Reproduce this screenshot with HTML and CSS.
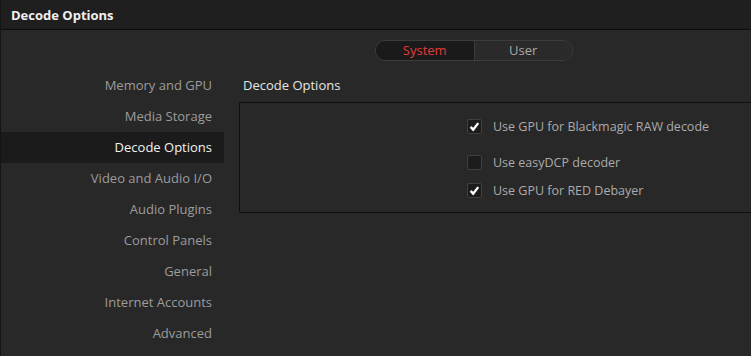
FILE: index.html
```html
<!DOCTYPE html>
<html lang="en">
<head>
    <meta charset="UTF-8">
    <title>Decode Options</title>
    <link rel="stylesheet" href="styles.css">
</head>
<body>
    <div class="window">
        <div class="header">Decode Options</div>

        <div class="tabs">
            <div class="toggle">
                <span class="seg active">System</span>
                <span class="seg">User</span>
            </div>
        </div>

        <div class="panel">
            <ul class="sidebar">
                <li>Memory and GPU</li>
                <li>Media Storage</li>
                <li class="selected">Decode Options</li>
                <li>Video and Audio I/O</li>
                <li>Audio Plugins</li>
                <li>Control Panels</li>
                <li>General</li>
                <li>Internet Accounts</li>
                <li>Advanced</li>
            </ul>

            <div class="content">
                <div class="section-title">Decode Options</div>
                <div class="box">
                    <label class="option first">
                        <span class="check"><svg viewBox="0 0 14 14"><path d="M2.8 7.4 L5.6 10.4 L11 3.4" /></svg></span>
                        Use GPU for Blackmagic RAW decode
                    </label>
                    <label class="option second">
                        <span class="check"></span>
                        Use easyDCP decoder
                    </label>
                    <label class="option third">
                        <span class="check"><svg viewBox="0 0 14 14"><path d="M2.8 7.4 L5.6 10.4 L11 3.4" /></svg></span>
                        Use GPU for RED Debayer
                    </label>
                </div>
            </div>
        </div>
    </div>
</body>
</html>
```

FILE: styles.css
```css
body, html {
    margin: 0;
    padding: 0;
    width: 100%;
    height: 100%;
    background-color: #282828;
    font-family: "Open Sans", "DejaVu Sans", sans-serif;
    font-size: 13px;
    overflow: hidden;
}
.window {
    height: 100%;
    border-left: 1px solid #141414;
    box-sizing: border-box;
}
.header {
    height: 29px;
    line-height: 30px;
    padding-left: 10px;
    background-color: #1f1f1f;
    border-bottom: 1px solid #0e0e0e;
    color: #f0f0f0;
    font-weight: bold;
}
.tabs {
    padding: 10px 0 0 374px;
    height: 40px;
    box-sizing: border-box;
}
.toggle {
    display: flex;
    width: 198px;
    height: 21px;
    border: 1px solid #3c3c3c;
    border-radius: 10px;
    overflow: hidden;
    box-sizing: border-box;
}
.seg {
    flex: 1;
    text-align: center;
    line-height: 19px;
    color: #a8a8a8;
    background-color: #2a2a2a;
}
.seg.active {
    color: #e23a3a;
    background-color: #1a1a1a;
    border-right: 1px solid #3c3c3c;
}
.panel {
    display: flex;
}
.sidebar {
    list-style: none;
    margin: 0;
    padding: 0;
    width: 223px;
}
.sidebar li {
    height: 31px;
    line-height: 31px;
    text-align: right;
    padding-right: 12px;
    color: #9c9c9c;
}
.sidebar li.selected {
    background-color: #1b1b1b;
    color: #f2f2f2;
}
.content {
    flex: 1;
    padding-left: 15px;
}
.section-title {
    height: 32px;
    line-height: 31px;
    padding-left: 4px;
    color: #e6e6e6;
}
.box {
    height: 111px;
    border: 1px solid #0f0f0f;
    border-right: none;
    border-radius: 2px 0 0 2px;
    padding-left: 227px;
    box-sizing: border-box;
}
.option {
    display: flex;
    align-items: center;
    gap: 11px;
    height: 16px;
    font-size: 12.5px;
    color: #ababab;
}
.option.first {
    margin-top: 15px;
}
.option.second {
    margin-top: 20px;
}
.option.third {
    margin-top: 12px;
}
.check {
    width: 15px;
    height: 15px;
    border: 1px solid #404040;
    border-radius: 2px;
    background-color: #1c1c1c;
    box-sizing: border-box;
    display: flex;
}
.check svg {
    width: 13px;
    height: 13px;
}
.check path {
    fill: none;
    stroke: #ffffff;
    stroke-width: 2.5;
}
```
